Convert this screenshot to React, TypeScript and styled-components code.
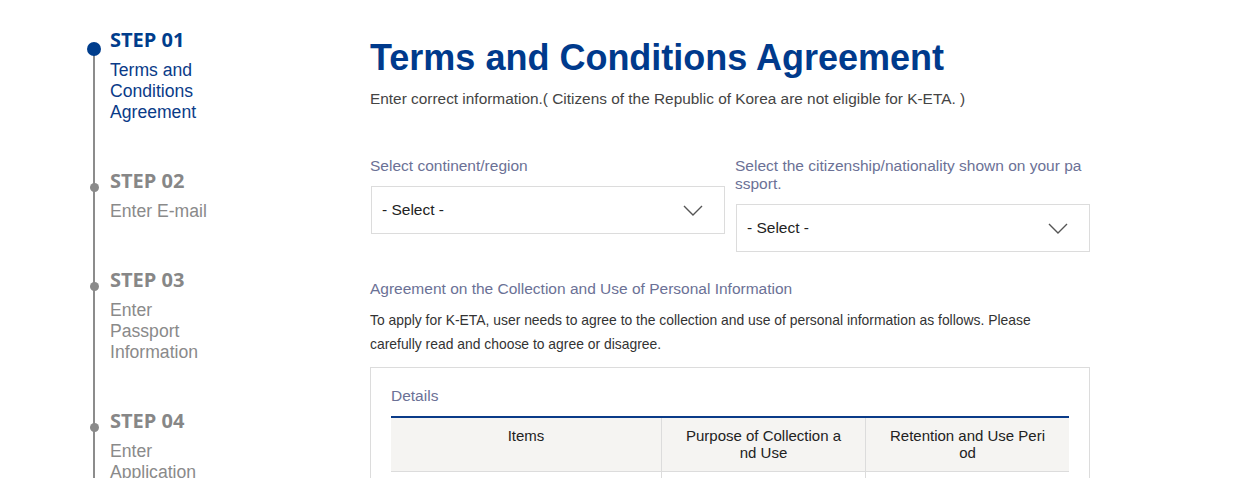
import React from "react";
import styled, { createGlobalStyle } from "styled-components";

const GlobalStyle = createGlobalStyle`
  html, body {
    margin: 0;
    padding: 0;
    background: #fff;
    overflow: hidden;
  }

  body {
    font-family: "Liberation Sans", Arial, sans-serif;
    color: #333;
  }
`;

const Page = styled.div`
  display: flex;
  padding-left: 87px;
`;

const Sidebar = styled.aside`
  width: 283px;
  flex-shrink: 0;
  padding-top: 26px;
`;

const StepList = styled.ol`
  position: relative;
  list-style: none;
  margin: 0;
  padding: 0;

  &::before {
    content: "";
    position: absolute;
    left: 6px;
    top: 23px;
    bottom: -200px;
    width: 2px;
    background: #8c8c8c;
  }
`;

const Step = styled.li<{ $active?: boolean }>`
  position: relative;
  padding-left: 23px;
  margin-bottom: 44px;
  color: ${(p) => (p.$active ? "#0a3b88" : "#8a8a8a")};
`;

const Dot = styled.span<{ $active?: boolean }>`
  position: absolute;
  left: ${(p) => (p.$active ? "0px" : "2.5px")};
  top: ${(p) => (p.$active ? "16px" : "16px")};
  width: ${(p) => (p.$active ? "14px" : "9px")};
  height: ${(p) => (p.$active ? "14px" : "9px")};
  border-radius: 50%;
  background: ${(p) => (p.$active ? "#003d8c" : "#8a8a8a")};
`;

const StepTitle = styled.div<{ $active?: boolean }>`
  font-family: "Open Sans", "Noto Sans", sans-serif;
  font-weight: 700;
  font-size: 20px;
  line-height: 28px;
  margin-bottom: 6px;
  color: ${(p) => (p.$active ? "#003d8c" : "#878787")};
`;

const StepLabel = styled.div`
  width: 102px;
  font-size: 17.6px;
  line-height: 21px;
`;

const Main = styled.main`
  width: 720px;
  padding-top: 37px;
`;

const Heading = styled.h1`
  margin: 0;
  font-size: 36px;
  line-height: 41px;
  font-weight: 700;
  color: #003a8c;
`;

const Lead = styled.p`
  margin: 10px 0 0;
  font-size: 15.4px;
  line-height: 22px;
  color: #444;
`;

const SelectRow = styled.div`
  display: grid;
  grid-template-columns: 1fr 1fr;
  column-gap: 10px;
  margin-top: 47px;
  align-items: start;
`;

const Field = styled.div`
  display: flex;
  flex-direction: column;
`;

const FieldLabel = styled.label`
  font-size: 15.5px;
  line-height: 18px;
  color: #6b7196;
  word-break: break-all;
  padding-right: 5px;
  margin-bottom: 11px;
`;

const SelectBox = styled.div`
  display: flex;
  align-items: center;
  justify-content: space-between;
  height: 46px;
  margin-left: 1px;
  padding: 0 21px 0 10px;
  border: 1px solid #dcdcdc;
  background: #fff;
  font-size: 15.5px;
  color: #222;
`;

const SectionTitle = styled.h2`
  margin: 28px 0 0;
  font-size: 15.5px;
  line-height: 18px;
  font-weight: 400;
  color: #6b7196;
`;

const Notice = styled.p`
  margin: 10px 0 0;
  font-size: 13.9px;
  line-height: 24px;
  color: #333;
  padding-right: 16px;
`;

const DetailsBox = styled.section`
  margin-top: 11px;
  border: 1px solid #dcdcdc;
  padding: 19px 20px 20px;
`;

const DetailsTitle = styled.h3`
  margin: 0 0 11px;
  font-size: 15.5px;
  line-height: 18px;
  font-weight: 400;
  color: #6b7196;
`;

const Table = styled.div`
  display: grid;
  grid-template-columns: 270px 204px 204px;
  border-top: 2px solid #0a3b88;
`;

const Cell = styled.div<{ $head?: boolean }>`
  padding: 9px 21px 10px;
  font-size: 15px;
  line-height: 17px;
  text-align: center;
  color: #222;
  word-break: break-all;
  background: ${(p) => (p.$head ? "#f5f4f2" : "#fff")};
  border-bottom: 1px solid #dcdcdc;

  & + & {
    border-left: 1px solid #dcdcdc;
  }

  &:nth-child(3n + 1) {
    border-left: none;
  }
`;

const Chevron = () => (
  <svg width="20" height="11" viewBox="0 0 20 11" fill="none">
    <polyline points="1,1 10,10 19,1" stroke="#555" strokeWidth="1.4" />
  </svg>
);

const steps = [
  { no: "01", label: "Terms and Conditions Agreement" },
  { no: "02", label: "Enter E-mail" },
  { no: "03", label: "Enter Passport Information" },
  { no: "04", label: "Enter Application Information" },
  { no: "05", label: "Payment" },
];

const App = () => {
  const current = 0;

  return (
    <>
      <GlobalStyle />
      <Page>
        <Sidebar>
          <StepList>
            {steps.map((step, i) => (
              <Step key={step.no} $active={i === current}>
                <Dot $active={i === current} />
                <StepTitle $active={i === current}>STEP {step.no}</StepTitle>
                <StepLabel>{step.label}</StepLabel>
              </Step>
            ))}
          </StepList>
        </Sidebar>

        <Main>
          <Heading>Terms and Conditions Agreement</Heading>
          <Lead>Enter correct information.( Citizens of the Republic of Korea are not eligible for K-ETA. )</Lead>

          <SelectRow>
            <Field>
              <FieldLabel>Select continent/region</FieldLabel>
              <SelectBox>
                <span>- Select -</span>
                <Chevron />
              </SelectBox>
            </Field>
            <Field>
              <FieldLabel>Select the citizenship/nationality shown on your passport.</FieldLabel>
              <SelectBox>
                <span>- Select -</span>
                <Chevron />
              </SelectBox>
            </Field>
          </SelectRow>

          <SectionTitle>Agreement on the Collection and Use of Personal Information</SectionTitle>
          <Notice>
            To apply for K-ETA, user needs to agree to the collection and use of personal information as follows.
            Please carefully read and choose to agree or disagree.
          </Notice>

          <DetailsBox>
            <DetailsTitle>Details</DetailsTitle>
            <Table>
              <Cell $head>Items</Cell>
              <Cell $head>Purpose of Collection and Use</Cell>
              <Cell $head>Retention and Use Period</Cell>
              <Cell>Name, date of birth, nationality, passport information</Cell>
              <Cell>Review of K-ETA application</Cell>
              <Cell>5 years</Cell>
            </Table>
          </DetailsBox>
        </Main>
      </Page>
    </>
  );
};

export default App;
